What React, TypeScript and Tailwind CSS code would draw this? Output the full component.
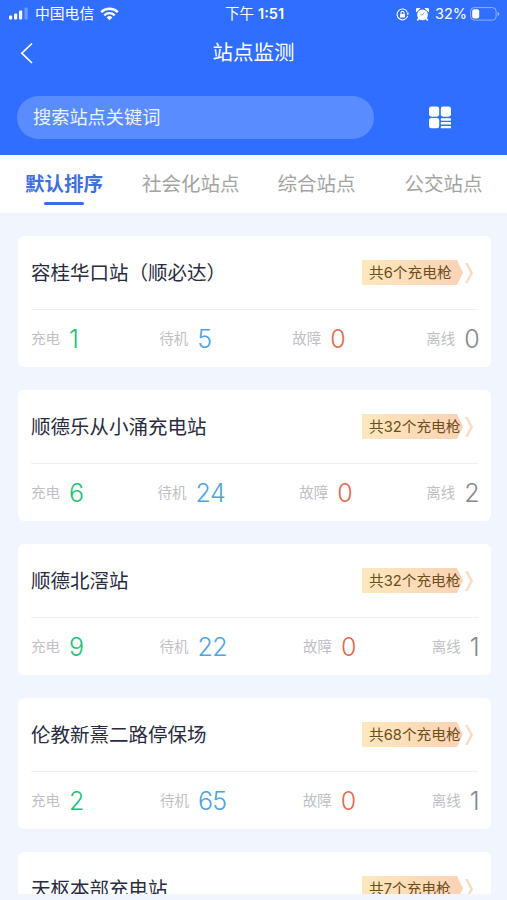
type Station = {
  name: string;
  guns: number;
  charging: number;
  standby: number;
  fault: number;
  offline: number;
};

const stations: Station[] = [
  { name: '容桂华口站（顺必达）', guns: 6, charging: 1, standby: 5, fault: 0, offline: 0 },
  { name: '顺德乐从小涌充电站', guns: 32, charging: 6, standby: 24, fault: 0, offline: 2 },
  { name: '顺德北滘站', guns: 32, charging: 9, standby: 22, fault: 0, offline: 1 },
  { name: '伦教新熹二路停保场', guns: 68, charging: 2, standby: 65, fault: 0, offline: 1 },
  { name: '天枢本部充电站', guns: 7, charging: 1, standby: 6, fault: 0, offline: 0 },
];

function StatusBar() {
  return (
    <div className="grid h-7 grid-cols-3 items-center pr-[7px] pl-[9px] text-[14.5px] leading-none">
      <div className="flex items-center">
        <svg width="21" height="13" viewBox="0 0 21 13" fill="#fff">
          <rect x="0" y="8.5" width="3.2" height="4" rx="1" />
          <rect x="5" y="6.5" width="3.2" height="6" rx="1" />
          <rect x="10" y="3.5" width="3.2" height="9" rx="1" />
          <rect x="15.5" y="0.5" width="3.2" height="12" rx="1" opacity="0.3" />
        </svg>
        <span className="ml-[5px] text-[14.8px] whitespace-nowrap">中国电信</span>
        <svg className="ml-[6px]" width="19" height="14" viewBox="0 0 19 14" fill="none" stroke="#fff" strokeWidth="2.4">
          <path d="M1.2 5.1a11.8 11.8 0 0 1 16.6 0" />
          <path d="M4.3 8.3a7.4 7.4 0 0 1 10.4 0" />
          <path d="M9.5 13.3 6.6 10.4a4.1 4.1 0 0 1 5.8 0z" fill="#fff" stroke="none" />
        </svg>
      </div>
      <div className="text-center whitespace-nowrap">
        下午 <span className="font-semibold">1:51</span>
      </div>
      <div className="flex items-center justify-end">
        <svg width="13" height="13" viewBox="0 0 13 13" fill="none" stroke="#fff" strokeWidth="1.1">
          <path d="M11.2 3.8A5.4 5.4 0 1 0 11.7 7.8" />
          <path d="m10.3 4.6 2.6.2-1 2.8z" fill="#fff" stroke="none" />
          <rect x="4" y="6" width="5" height="3.6" rx="0.6" fill="#fff" stroke="none" />
          <path d="M5 6V4.8a1.5 1.5 0 0 1 3 0V6" />
        </svg>
        <svg className="ml-[7px]" width="13" height="13" viewBox="0 0 13 13" fill="#fff">
          <circle cx="6.5" cy="6.9" r="5.4" />
          <path d="M.3 4.2A2.7 2.7 0 0 1 4.5.5zM12.7 4.2A2.7 2.7 0 0 0 8.5.5z" />
          <path d="m2.8 10.6-1.5 1.9M10.2 10.6l1.5 1.9" stroke="#fff" strokeWidth="1.6" />
          <path d="m8.3 4.6-1.8 2.3H4.3" fill="none" stroke="#306eff" strokeWidth="0.7" />
        </svg>
        <span className="ml-[6px]">32%</span>
        <svg className="ml-[3px]" width="30" height="14" viewBox="0 0 30 14" fill="none">
          <rect x="0.6" y="0.6" width="25.5" height="12.5" rx="3.6" stroke="#fff" strokeOpacity="0.45" />
          <rect x="2.2" y="2.2" width="7" height="9.3" rx="2" fill="#fff" />
          <path d="M27.6 4.8v4.4q1.7-.7 1.7-2.2t-1.7-2.2z" fill="#fff" fillOpacity="0.5" />
        </svg>
      </div>
    </div>
  );
}

function Header() {
  return (
    <header className="h-[155px] bg-[#306eff] text-white">
      <StatusBar />
      <div className="grid h-12 grid-cols-[1fr_auto_1fr] items-center px-5 pt-0.5">
        <svg width="14" height="22" viewBox="0 0 14 22" fill="none" stroke="#fff" strokeWidth="1.7">
          <path d="M12 1.5 1.8 11.2 12 21" />
        </svg>
        <h1 className="text-[20.5px] leading-none">站点监测</h1>
      </div>
      <div className="mt-5 flex items-center pl-[17px]">
        <div className="flex h-[43px] w-[357px] items-center rounded-full bg-[#598cff] px-4 text-[18.2px] leading-none text-white/90">
          搜索站点关键词
        </div>
        <svg className="ml-[54px]" width="24" height="24" viewBox="0 0 24 24" fill="#fff">
          <rect x="1" y="0.5" width="10.2" height="10.2" rx="2.4" />
          <rect x="12.8" y="0.5" width="10.2" height="10.2" rx="2.4" />
          <rect x="1" y="12.1" width="10.2" height="10.2" rx="2.4" />
          <rect x="12.8" y="12.3" width="10.2" height="2.4" rx="0.6" />
          <rect x="12.8" y="16.1" width="10.2" height="2.4" rx="0.6" />
          <rect x="12.8" y="19.9" width="10.2" height="2.4" rx="0.6" />
        </svg>
      </div>
    </header>
  );
}

function Tabs() {
  return (
    <nav className="flex h-[58px] bg-white pt-5 pl-[25px] text-[19.5px] leading-none whitespace-nowrap text-[#a3a3a3]">
      <div className="flex flex-col items-center font-bold text-[#3f70dc]">
        <span>默认排序</span>
        <span className="mt-[7px] h-[3px] w-10 rounded-full bg-[#3d6de0]" />
      </div>
      <span className="ml-[39px]">社会化站点</span>
      <span className="ml-[38px]">综合站点</span>
      <span className="ml-[49px]">公交站点</span>
    </nav>
  );
}

function GunBadge({ count }: { count: number }) {
  return (
    <div className="flex items-center">
      <div className="flex h-[25px] w-[101px] items-center bg-linear-to-r from-[#fde8bc] to-[#fbd2b6] pt-px pl-[7px] text-[14.7px] leading-none whitespace-nowrap text-[#6b4e1c] [clip-path:polygon(0_0,94%_0,100%_50%,94%_100%,0_100%)]">
        共{count}个充电枪
      </div>
      <svg className="ml-px" width="10" height="22" viewBox="0 0 10 22" fill="#fbdcc2">
        <path d="M1 1h2.7l5.3 10-5.3 10H1l5.3-10z" />
      </svg>
    </div>
  );
}

function Stat({ label, value, color }: { label: string; value: number; color: string }) {
  return (
    <div className="flex items-center">
      <span className="text-[14.5px] text-[#c0c0c6]">{label}</span>
      <span className={`mt-0.5 ml-[9px] -mr-px text-[25px] leading-none font-[350] tracking-[-0.6px] ${color}`}>{value}</span>
    </div>
  );
}

function StationCard({ station }: { station: Station }) {
  return (
    <article className="h-[131px] shrink-0 rounded-md bg-white px-[13px]">
      <div className="flex h-[74px] items-center justify-between border-b border-[#efeff2] pr-1">
        <h2 className="pt-0.5 text-[19.5px] leading-none whitespace-nowrap text-[#292b40]">{station.name}</h2>
        <GunBadge count={station.guns} />
      </div>
      <div className="flex h-[57px] items-center justify-between">
        <Stat label="充电" value={station.charging} color="text-[#24bf7b]" />
        <Stat label="待机" value={station.standby} color="text-[#4da3df]" />
        <Stat label="故障" value={station.fault} color="text-[#df6a51]" />
        <Stat label="离线" value={station.offline} color="text-[#85878b]" />
      </div>
    </article>
  );
}

export default function App() {
  return (
    <main className="h-[900px] w-[507px] overflow-hidden bg-[#f0f5fe] font-[Inter,'Noto_Sans_CJK_SC',sans-serif]">
      <Header />
      <Tabs />
      <div className="flex h-[681px] flex-col gap-[23px] overflow-hidden pt-[23px] pr-4 pl-[18px]">
        {stations.map((station) => (
          <StationCard key={station.name} station={station} />
        ))}
      </div>
    </main>
  );
}
